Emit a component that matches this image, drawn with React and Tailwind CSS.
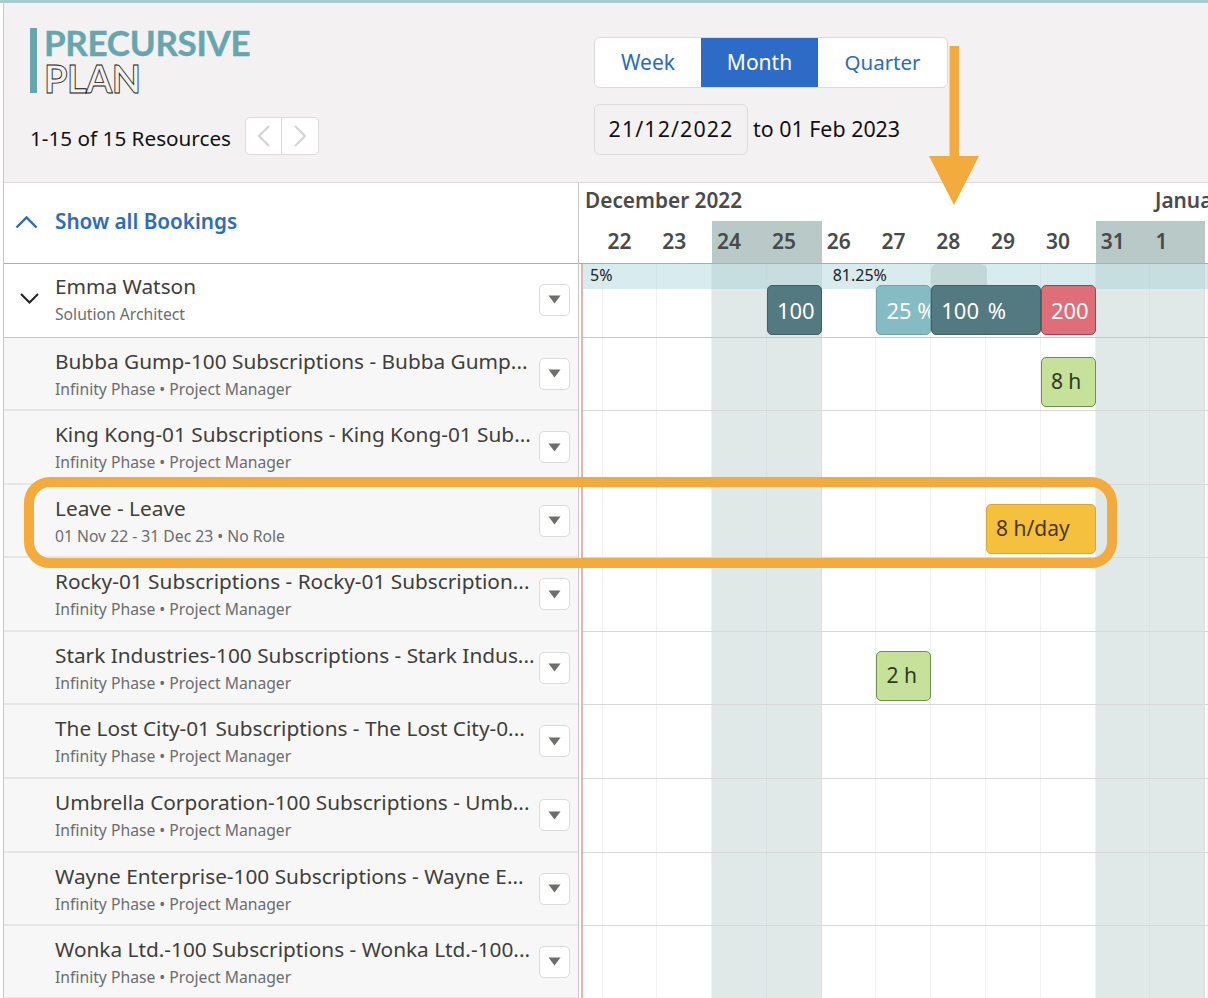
const days = [
  { n: "" },
  { n: "22" },
  { n: "23" },
  { n: "24", off: true },
  { n: "25", off: true },
  { n: "26" },
  { n: "27" },
  { n: "28" },
  { n: "29" },
  { n: "30" },
  { n: "31", off: true },
  { n: "1", off: true },
  { n: "" },
];

const gridCols = "grid grid-cols-[19.5px_repeat(11,54.8px)_1fr]";

const rows = [
  { title: "Bubba Gump-100 Subscriptions - Bubba Gump...", sub: "Infinity Phase • Project Manager", h: "h-[73px]" },
  { title: "King Kong-01 Subscriptions - King Kong-01 Sub...", sub: "Infinity Phase • Project Manager", h: "h-[74px]" },
  { title: "Leave - Leave", sub: "01 Nov 22 - 31 Dec 23 • No Role", h: "h-[73px]" },
  { title: "Rocky-01 Subscriptions - Rocky-01 Subscription...", sub: "Infinity Phase • Project Manager", h: "h-[74px]" },
  { title: "Stark Industries-100 Subscriptions - Stark Indus...", sub: "Infinity Phase • Project Manager", h: "h-[73px]" },
  { title: "The Lost City-01 Subscriptions - The Lost City-0...", sub: "Infinity Phase • Project Manager", h: "h-[74px]" },
  { title: "Umbrella Corporation-100 Subscriptions - Umb...", sub: "Infinity Phase • Project Manager", h: "h-[74px]" },
  { title: "Wayne Enterprise-100 Subscriptions - Wayne E...", sub: "Infinity Phase • Project Manager", h: "h-[73px]" },
  { title: "Wonka Ltd.-100 Subscriptions - Wonka Ltd.-100...", sub: "Infinity Phase • Project Manager", h: "h-[73px]" },
];

const DropButton = ({ className = "" }) => (
  <div className={`flex h-[32px] w-[31px] shrink-0 items-center justify-center rounded-[5px] border border-[#dddbda] bg-white ${className}`}>
    <svg width="13" height="9" viewBox="0 0 13 9">
      <path d="M0.5 0.5h12L6.5 8.5z" fill="#706e6b" />
    </svg>
  </div>
);

const Bar = ({ className, children }) => (
  <div className={`flex h-[50px] items-center overflow-hidden whitespace-nowrap rounded-[5px] border pl-[9px] ${className}`}>
    {children}
  </div>
);

const Logo = () => (
  <div className="flex h-[65px] gap-[7px]">
    <div className="w-[7px] bg-[#67a6af]" />
    <div className="flex flex-col">
      <div className="font-['Lato'] text-[35px] font-bold leading-[29px] tracking-[-0.3px] text-[#67a6af] [-webkit-text-stroke:0.4px_#67a6af]">PRECURSIVE</div>
      <div className="mt-[7px] font-['Lato'] text-[38px] font-bold leading-[29px] tracking-[-0.6px] text-[#f3f1f2] [-webkit-text-stroke:0.8px_#111]">PLAN</div>
    </div>
  </div>
);

export default function App() {
  return (
    <div className="relative h-[998px] w-[1208px] overflow-hidden border-t-[3px] border-[#a9ccd0] bg-white pl-[3px] font-['Noto_Sans',sans-serif] text-[#3e3e3c]">
      <div className="border-l border-[#c9c7c5]">
        {/* Top bar */}
        <div className="flex h-[180px] border-b border-[#dddbda] bg-[#f3f1f2]">
          <div className="w-[590px] shrink-0 pl-[26px] pt-[25px]">
            <Logo />
            <div className="mt-[24px] flex items-center gap-[14px]">
              <span className="mt-[6px] whitespace-nowrap text-[20.7px] text-[#111]">1-15 of 15 Resources</span>
              <div className="flex h-[38px] w-[74px] rounded-[5px] border border-[#dddbda] bg-white">
                <div className="flex flex-1 items-center justify-center border-r border-[#dddbda]">
                  <svg width="14" height="24" viewBox="0 0 14 24" fill="none" stroke="#d4d2d0" strokeWidth="2"><path d="M12 2 2 12l10 10" /></svg>
                </div>
                <div className="flex flex-1 items-center justify-center">
                  <svg width="14" height="24" viewBox="0 0 14 24" fill="none" stroke="#d4d2d0" strokeWidth="2"><path d="m2 2 10 10L2 22" /></svg>
                </div>
              </div>
            </div>
          </div>
          <div className="pt-[34px]">
            <div className="flex h-[51px] w-[354px] overflow-hidden rounded-[6px] border border-[#dddbda] bg-white text-[21px] text-[#2e6bb8]">
              <div className="flex w-[106px] items-center justify-center">Week</div>
              <div className="flex w-[117px] items-center justify-center bg-[#2e6bc6] text-white">Month</div>
              <div className="flex flex-1 items-center justify-center text-[20.5px]">Quarter</div>
            </div>
            <div className="mt-[16px] flex items-center gap-[5px] text-[21.4px] text-[#111]">
              <div className="flex h-[51px] w-[154px] items-center justify-center rounded-[6px] border border-[#dddbda] tracking-[1.1px]">21/12/2022</div>
              <span>to 01 Feb 2023</span>
            </div>
          </div>
        </div>

        <div className="flex">
          {/* Resource column */}
          <div className="w-[575px] shrink-0 border-r border-[#c9c7c5]">
            <div className="flex h-[81px] items-center gap-[17px] border-b border-[#b0adab] pb-[2px] pl-[11px] text-[#2e6bb8]">
              <svg width="23" height="14" viewBox="0 0 23 14" fill="none" stroke="currentColor" strokeWidth="2.4"><path d="m1.5 12.5 10-10 10 10" /></svg>
              <span className="text-[20.7px] font-semibold">Show all Bookings</span>
            </div>
            <div className="flex h-[74px] items-center border-b border-[#c9c7c5] pr-[8px]">
              <svg className="mx-[16px] mt-[-4px] shrink-0" width="19" height="11" viewBox="0 0 19 11" fill="none" stroke="#222" strokeWidth="2"><path d="m1 1 8.5 8.5L18 1" /></svg>
              <div className="mb-[2px] flex-1">
                <div className="text-[20.8px] leading-[27px]">Emma Watson</div>
                <div className="mt-[2px] text-[15.7px] leading-[25px] text-[#6b6d70]">Solution Architect</div>
              </div>
              <DropButton className="mb-[2px]" />
            </div>
            {rows.map((r) => (
              <div key={r.title} className={`flex items-center border-b-2 border-[#e6e6e6] bg-[#f7f7f7] pl-[51px] pr-[8px] ${r.h}`}>
                <div className="min-w-0 flex-1">
                  <div className="whitespace-nowrap text-[20.8px] leading-[28px]">{r.title}</div>
                  <div className="mt-[3px] text-[15.7px] leading-[23px] text-[#6b6d70]">{r.sub}</div>
                </div>
                <DropButton />
              </div>
            ))}
          </div>

          {/* Chart */}
          <div className="min-w-0 flex-1 overflow-hidden">
            <div className="h-[81px] border-b border-[#b0adab] pl-[4px] font-semibold text-[#4a4a4a]">
              <div className="flex h-[38px] items-center pb-[2px] text-[20.8px]">
                <span className="ml-[2px] w-[570px] shrink-0 whitespace-nowrap">December 2022</span>
                <span className="whitespace-nowrap">January</span>
              </div>
              <div className={`${gridCols} h-[42px] text-[21px]`}>
                {days.map((d, i) => (
                  <div key={i} className={`flex items-center pl-[5px] ${d.off ? "bg-[#b9c9c8]" : ""}`}>{d.n}</div>
                ))}
              </div>
            </div>

            <div className="relative ml-[2px] border-l-2 border-[#e8b4ac]">
              {/* day columns behind the rows */}
              <div className={`${gridCols} absolute inset-0`}>
                {days.map((d, i) => (
                  <div key={i} className={`border-r ${d.off ? "border-[#d8e1e1] bg-[#e1e8e8]" : "border-[#f1f1f1]"}`} />
                ))}
              </div>

              <div className="relative h-[74px] border-b border-[#c9c7c5]">
                <div className={`${gridCols} absolute inset-x-0 top-0 h-[25px] bg-[#a8d3da]/45 text-[16px] leading-[22px] text-[#222]`}>
                  <div className="col-start-1 whitespace-nowrap pl-[7px]">5%</div>
                  <div className="col-start-6 whitespace-nowrap pl-[11px]">81.25%</div>
                  <div className="col-start-8 -mr-px rounded-t-[6px] bg-[#b5cacc]/60" />
                </div>
                <div className={`${gridCols} relative pt-[21px] text-[22px]`}>
                  <Bar className="col-start-5 border-[#3e6066] bg-[#527a80] text-white">100</Bar>
                  <Bar className="col-start-7 border-[#6fa6ad] bg-[#85bcc3] text-white">25 %</Bar>
                  <Bar className="col-span-2 col-start-8 border-[#3e6066] bg-[#527a80] text-white [word-spacing:3px]">100 %</Bar>
                  <Bar className="col-start-10 border-[#a8404c] bg-[#e06e78] text-white">200</Bar>
                </div>
              </div>

              {rows.map((r, i) => (
                <div key={r.title} className={`relative ${gridCols} border-b border-[#d8d8d8] pt-[19px] text-[21px] ${r.h}`}>
                  {i === 0 && <Bar className="col-start-10 border-[#6f8e4f] bg-[#c5e19a] text-[#2f3a22]">8 h</Bar>}
                  {i === 2 && <Bar className="col-span-2 col-start-9 border-[#d9a63a] bg-[#f6c03f] text-[#4a3a12]">8 h/day</Bar>}
                  {i === 4 && <Bar className="col-start-7 border-[#6f8e4f] bg-[#c5e19a] text-[#2f3a22]">2 h</Bar>}
                </div>
              ))}
            </div>
          </div>
        </div>
      </div>

      {/* Annotations */}
      <div className="absolute left-[24px] top-[474px] h-[91px] w-[1093px] rounded-[26px] border-[10px] border-[#f3ab3e]" />
      <svg className="absolute left-[929px] top-[43px]" width="50" height="160" viewBox="0 0 50 160">
        <path d="M20.5 0h9.5v110h20L25 159 0 110h20.5z" fill="#f3ab3e" />
      </svg>
    </div>
  );
}
